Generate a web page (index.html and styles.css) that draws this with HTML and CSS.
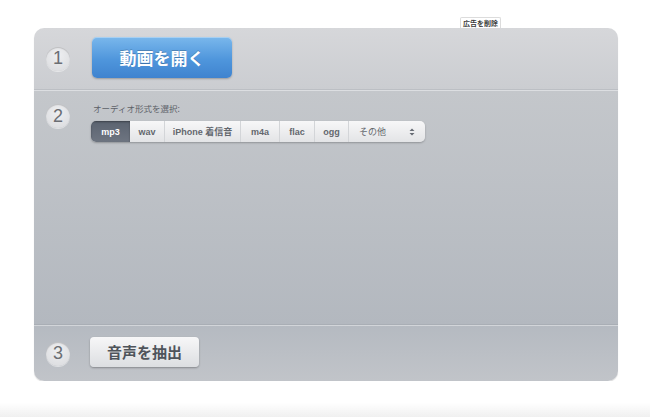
FILE: index.html
```html
<!DOCTYPE html>
<html lang="ja">
<head>
<meta charset="utf-8">
<link rel="stylesheet" href="styles.css">
</head>
<body>
<div class="page">
  <div class="topbar">
    <span class="ad-remove">広告を削除</span>
  </div>
  <div class="panel">
    <div class="section s1">
      <div class="num">1</div>
      <div class="open-btn">動画を開く</div>
    </div>
    <div class="section s2">
      <div class="num">2</div>
      <div class="format">
        <div class="label">オーディオ形式を選択:</div>
        <div class="seg">
          <span class="opt active w-mp3">mp3</span>
          <span class="opt w-wav">wav</span>
          <span class="opt w-iph">iPhone 着信音</span>
          <span class="opt w-m4a">m4a</span>
          <span class="opt w-flac">flac</span>
          <span class="opt w-ogg">ogg</span>
          <span class="opt other w-oth">その他<svg class="updown" width="6" height="8" viewBox="0 0 6 8"><path d="M0.5 3 L3 0.5 L5.5 3 Z M0.5 5 L3 7.5 L5.5 5 Z" fill="#666b73"/></svg></span>
        </div>
      </div>
    </div>
    <div class="section s3">
      <div class="num">3</div>
      <div class="extract-btn">音声を抽出</div>
    </div>
  </div>
  <div class="footer"></div>
</div>
</body>
</html>
```
FILE: styles.css
```css
html, body {
  margin: 0;
  padding: 0;
  background: #ffffff;
}
body {
  font-family: "Noto Sans CJK JP", "Noto Sans", "Liberation Sans", sans-serif;
  width: 650px;
  height: 417px;
  overflow: hidden;
}
.page {
  display: flex;
  flex-direction: column;
  height: 417px;
}
.topbar {
  height: 28px;
  display: flex;
  align-items: flex-end;
  padding-left: 460px;
}
.ad-remove {
  font-size: 7px;
  line-height: 10px;
  font-weight: 700;
  color: #3a3a3a;
  border: 1px solid #dcdcdc;
  border-bottom: none;
  border-radius: 2px 2px 0 0;
  padding: 0 2px;
  background: #ffffff;
}
.panel {
  margin-left: 34px;
  width: 584px;
  height: 353px;
  border-radius: 10px;
  overflow: hidden;
  display: flex;
  flex-direction: column;
  box-shadow: 0 1px 1px rgba(0,0,0,0.15);
}
.section {
  display: flex;
  padding-left: 12px;
}
.s1 {
  height: 61px;
  align-items: center;
  background: linear-gradient(#d6d7da, #cbcdd1);
  border-bottom: 1px solid #bcbfc4;
}
.s2 {
  flex: 1;
  padding-top: 12px;
  background: linear-gradient(#c4c7cb, #b3b8bf);
  border-top: 1px solid #dcdee1;
  border-bottom: 1px solid #a9aeb5;
}
.s3 {
  height: 55px;
  align-items: center;
  background: linear-gradient(#b5bac1, #c1c4c9);
  border-top: 1px solid #d2d5d9;
}
.num {
  width: 24px;
  height: 24px;
  border-radius: 50%;
  background: radial-gradient(circle at 50% 35%, #eeeff1, #d9dadd);
  box-shadow: inset 0 1px 1px rgba(0,0,0,0.18), 0 1px 0 rgba(255,255,255,0.5);
  display: flex;
  align-items: center;
  justify-content: center;
  font-family: "Liberation Sans", "DejaVu Sans", sans-serif;
  font-size: 18px;
  color: #6b6e73;
  flex: none;
}
.s2 .num {
  margin-top: 1px;
}
.open-btn {
  margin-left: 22px;
  width: 140px;
  height: 41px;
  border-radius: 5px;
  background: linear-gradient(#7ab8ec, #4f96dc 55%, #3f83cf);
  box-shadow: 0 1px 2px rgba(0,0,0,0.25), inset 0 1px 0 rgba(255,255,255,0.35);
  display: flex;
  align-items: center;
  justify-content: center;
  color: #ffffff;
  font-size: 17px;
  font-weight: 700;
  text-shadow: 0 -1px 0 rgba(0,0,0,0.2);
  margin-top: -2px;
}
.format {
  margin-left: 22px;
  display: flex;
  flex-direction: column;
}
.label {
  font-size: 8.5px;
  line-height: 10px;
  color: #5d6168;
  margin-bottom: 8px;
  margin-left: 1px;
}
.seg {
  display: flex;
  height: 21px;
  border-radius: 5px;
  background: linear-gradient(#f7f7f8, #e3e4e6);
  box-shadow: 0 1px 2px rgba(0,0,0,0.25);
  overflow: hidden;
  margin-left: -1px;
}
.opt {
  display: flex;
  align-items: center;
  justify-content: center;
  font-size: 9px;
  font-weight: 700;
  color: #63676d;
  border-right: 1px solid #d3d5d8;
  font-family: "Liberation Sans", "Noto Sans CJK JP", sans-serif;
}
.opt.active {
  background: linear-gradient(#5b6370, #6e7581);
  color: #ffffff;
  border-right: none;
  box-shadow: inset 0 1px 2px rgba(0,0,0,0.35);
}
.opt.other {
  border-right: none;
  justify-content: space-between;
  padding: 0 10px 0 10px;
  font-family: "Noto Sans CJK JP", sans-serif;
  font-weight: 400;
}
.w-mp3 { width: 39px; }
.w-wav { width: 34px; }
.w-iph { width: 75px; }
.w-m4a { width: 38px; }
.w-flac { width: 34px; }
.w-ogg { width: 33px; }
.w-oth { width: 56px; }
.extract-btn {
  margin-left: 20px;
  width: 109px;
  height: 30px;
  border-radius: 4px;
  background: linear-gradient(#f7f7f8, #dcdee1);
  box-shadow: 0 1px 2px rgba(0,0,0,0.3);
  display: flex;
  align-items: center;
  justify-content: center;
  color: #4f545b;
  font-size: 15px;
  font-weight: 700;
  margin-top: -4px;
}
.footer {
  flex: 1;
  background: linear-gradient(#ffffff 60%, #f0f0f0);
}
```
